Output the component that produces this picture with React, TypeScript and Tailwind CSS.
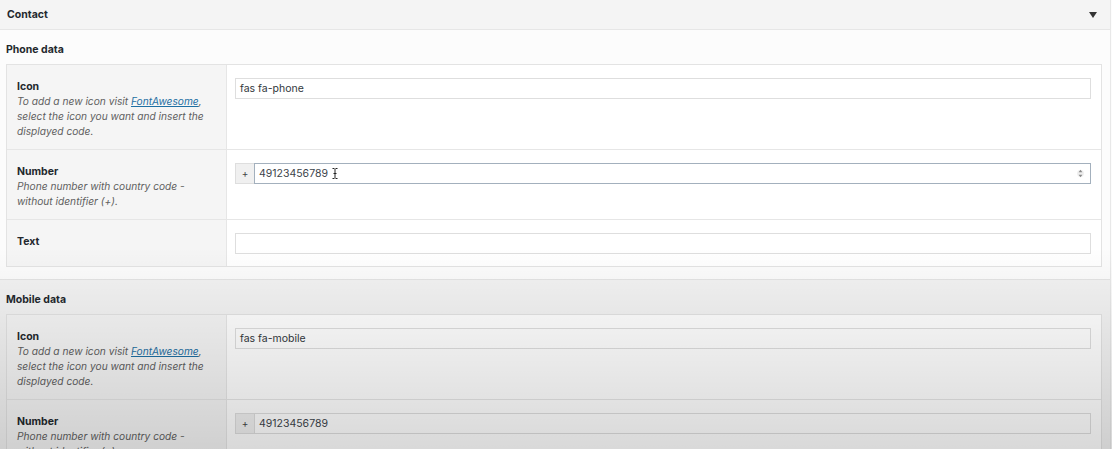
import type { ReactNode } from "react";

const font = { fontFamily: "Inter, 'Noto Sans', 'Liberation Sans', sans-serif" };

const IconHelp = () => (
  <>
    To add a new icon visit{" "}
    <span className="text-[#1e6fa3] underline">FontAwesome</span>, select the
    icon you want and insert the displayed code.
  </>
);

const Row = ({
  label,
  desc,
  children,
  last,
}: {
  label: string;
  desc?: ReactNode;
  children: ReactNode;
  last?: boolean;
}) => (
  <div className={`grid grid-cols-[220px_1fr] ${last ? "" : "border-b border-[#e6e6e6]"}`}>
    <div className="bg-[#f5f5f5] border-r border-[#e6e6e6] pl-[10px] pr-[10px] pt-[14px] pb-[10px]">
      <div className="text-[10.5px] leading-[15px] font-bold text-[#23282d]">{label}</div>
      {desc && (
        <div className="text-[10.2px] leading-[15px] italic text-[#5f5f5f]">{desc}</div>
      )}
    </div>
    <div className="pl-[8px] pr-[10px] pt-[13px] pb-[12px]">{children}</div>
  </div>
);

const TextInput = ({ value }: { value: string }) => (
  <div className="h-[21px] border border-[#dedede] bg-white px-[4px] text-[10.5px] leading-[19px] text-[#32373c]">
    {value}
  </div>
);

const NumberInput = ({ value, focus }: { value: string; focus?: boolean }) => (
  <div className="flex h-[21px]">
    <div className="w-[19px] border border-r-0 border-[#dedede] bg-[#f0f0f0] text-center text-[10px] leading-[19px] text-[#444]">
      +
    </div>
    <div
      className={`relative flex flex-1 items-center justify-between border bg-white pl-[4px] pr-[6px] text-[10.5px] text-[#3c434a] ${
        focus ? "border-[#a3b0bd]" : "border-[#dedede]"
      }`}
    >
      <span className="flex items-center gap-[4px]">
        {value}
        {focus && (
          <svg width="6" height="11" viewBox="0 0 6 11" className="text-[#222]">
            <path d="M0.5 0.5h2M3.5 0.5h2M3 1v9M0.5 10.5h2M3.5 10.5h2M1.5 5.5h3" stroke="currentColor" strokeWidth="1" fill="none" />
          </svg>
        )}
      </span>
      {focus && (
        <svg width="7" height="11" viewBox="0 0 7 11">
          <circle cx="3.5" cy="5.5" r="3.4" fill="#eeeeee" />
          <path d="M3.5 1.8 L5.4 4.3 H1.6 Z" fill="#888" />
          <path d="M3.5 9.2 L5.4 6.7 H1.6 Z" fill="#888" />
        </svg>
      )}
    </div>
  </div>
);

const Section = ({ title, children, tone }: { title: string; children: ReactNode; tone: string }) => (
  <div className={`pl-[6px] pr-[8px] pt-[13px] pb-[12px] ${tone}`}>
    <div className="mb-[7px] text-[10.5px] leading-[14px] font-bold text-[#23282d]">{title}</div>
    <div className="border border-[#e3e3e3] bg-white">{children}</div>
  </div>
);

export default function App() {
  return (
    <div style={font} className="relative h-[449px] w-[1112px] overflow-hidden bg-[#fcfcfc]">
      <div className="w-[1111px] border-r border-[#e8e8e8]">
        <div className="flex h-[30px] items-center justify-between border-b border-[#e6e6e6] bg-[#f4f4f4] pl-[7px] pr-[13px]">
          <span className="text-[10.5px] font-bold text-[#23282d]">Contact</span>
          <svg width="8" height="6" viewBox="0 0 8 6">
            <path d="M0 0 H8 L4 6 Z" fill="#333" />
          </svg>
        </div>

        <Section title="Phone data" tone="bg-[#fcfcfc]">
          <Row label="Icon" desc={<IconHelp />}>
            <TextInput value="fas fa-phone" />
          </Row>
          <Row label="Number" desc="Phone number with country code - without identifier (+).">
            <NumberInput value="49123456789" focus />
          </Row>
          <Row label="Text" last>
            <TextInput value="" />
          </Row>
        </Section>

        <div className="border-t border-[#e4e4e4]">
          <Section title="Mobile data" tone="bg-[#f3f3f3]">
            <Row label="Icon" desc={<IconHelp />}>
              <TextInput value="fas fa-mobile" />
            </Row>
            <Row label="Number" desc="Phone number with country code - without identifier (+).">
              <NumberInput value="49123456789" />
            </Row>
            <Row label="Text" last>
              <TextInput value="" />
            </Row>
          </Section>
        </div>
      </div>

      {/* video vignette */}
      <div className="pointer-events-none absolute inset-0 bg-gradient-to-b from-transparent from-55% to-black/15" />
    </div>
  );
}
